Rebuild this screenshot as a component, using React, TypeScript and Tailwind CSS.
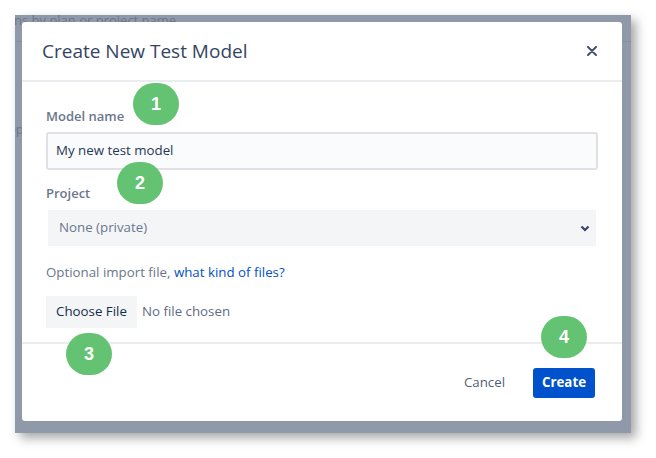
import React from "react";

function Badge({ n, cls }: { n: string; cls: string }) {
  return (
    <div
      className={`absolute w-[46px] h-[42px] rounded-full bg-[#63c372] flex items-center justify-center text-white text-[18px] font-bold font-['Liberation_Sans',Arial,sans-serif] ${cls}`}
    >
      {n}
    </div>
  );
}

export default function App() {
  return (
    <div className="relative w-[656px] h-[458px] bg-white overflow-hidden font-['Open_Sans',sans-serif] pt-[15px] pl-[15px]">
      {/* screenshot frame with dimmed page behind */}
      <div className="relative w-[616px] h-[418px] bg-[#8f99aa] shadow-[5px_5px_10px_rgba(0,0,0,0.35)] overflow-hidden pt-[7px] pl-[7px]">
        <div className="absolute top-[-4px] left-[-1px] text-[13px] leading-[18px] text-[#6c7789] whitespace-nowrap">
          ns by plan or project name
        </div>
        <div className="absolute top-[26px] left-0 right-0 h-px bg-[#8590a1]" />
        <div className="absolute top-[105px] left-[-7px] text-[13px] leading-[18px] text-[#6c7789]">op</div>

        {/* dialog */}
        <div className="relative w-[600px] h-[399px] bg-white rounded-[3px] flex flex-col">
          <div className="h-[60px] border-b-2 border-[#ebecf0] flex items-center justify-between pl-[20px] pr-[25px]">
            <div className="text-[19px] text-[#344563] leading-[24px]">Create New Test Model</div>
            <svg width="10" height="10" viewBox="0 0 10 10">
              <path d="M1 1L9 9M9 1L1 9" stroke="#42526e" strokeWidth="2" strokeLinecap="round" />
            </svg>
          </div>

          <div className="h-[260px] px-[24px] pt-[24px] flex flex-col">
            <div className="text-[13px] leading-[20px] font-semibold text-[#6b778c]">Model name</div>
            <div className="mt-[6px] h-[38px] border-2 border-[#dfe1e6] bg-[#fafbfc] rounded-[3px] flex items-center pl-[8px] text-[13.3px] text-[#253858]">
              My new test model
            </div>
            <div className="mt-[13px] text-[13px] leading-[20px] font-semibold text-[#6b778c]">Project</div>
            <div className="mt-[7px] mx-[2px] h-[36px] bg-[#f4f5f7] flex items-center justify-between pl-[11px] pr-[6px] text-[13.3px] text-[#6b778c]">
              <span>None (private)</span>
              <svg width="10" height="7" viewBox="0 0 10 7">
                <path d="M1.5 1.5L5 5L8.5 1.5" stroke="#344563" strokeWidth="2.2" fill="none" />
              </svg>
            </div>
            <div className="mt-[16px] text-[13.3px] leading-[20px] text-[#6b778c]">
              Optional import file, <span className="text-[#0052cc]">what kind of files?</span>
            </div>
            <div className="mt-[14px] flex items-center">
              <div className="h-[32px] w-[91px] bg-[#f4f5f7] flex items-center justify-center text-[13.3px] text-[#172b4d]">
                Choose File
              </div>
              <span className="ml-[5px] text-[13.3px] text-[#5e6c84]">No file chosen</span>
            </div>
          </div>

          <div className="border-t-2 border-[#ebecf0] flex-1 flex justify-end items-start pt-[24px] pr-[27px]">
            <div className="h-[30px] px-[12px] flex items-center text-[13.3px] text-[#505f79]">Cancel</div>
            <div className="ml-[16px] h-[30px] w-[62px] rounded-[3px] bg-[#0052cc] flex items-center justify-center text-[13.3px] font-bold text-white">
              Create
            </div>
          </div>
        </div>
      </div>

      <Badge n="1" cls="left-[133px] top-[83px]" />
      <Badge n="2" cls="left-[117px] top-[162px]" />
      <Badge n="3" cls="left-[66px] top-[333px]" />
      <Badge n="4" cls="left-[541px] top-[316px]" />
    </div>
  );
}
